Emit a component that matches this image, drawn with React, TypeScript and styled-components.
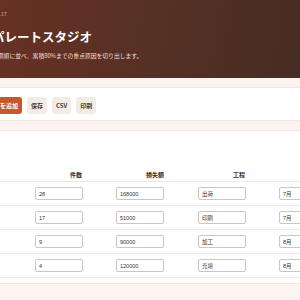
import styled, { createGlobalStyle } from 'styled-components';

const GlobalStyle = createGlobalStyle`
  html, body {
    margin: 0;
    overflow: hidden;
    background: #fbf4f1;
  }
  body {
    font-family: 'Noto Sans CJK JP', 'Noto Sans', sans-serif;
    color: #3b2c26;
  }
`;

const Page = styled.div`
  width: 480px;
  margin-left: -64px;
`;

const Hero = styled.header`
  background: linear-gradient(100deg, #6e3224 0%, #563024 45%, #3b2a22 100%);
  padding: 11px 20px 18px 56px;
  color: #fff;
`;

const Eyebrow = styled.div`
  font-size: 5px;
  line-height: 6px;
  color: #e2b8a6;
  letter-spacing: 0.3px;
`;

const Title = styled.h1`
  margin: 11px 0 0;
  font-size: 12.5px;
  line-height: 18px;
  font-weight: 700;
`;

const Lead = styled.p`
  margin: 5px 0 0;
  font-size: 5.8px;
  line-height: 9px;
  color: #f1dcd3;
`;

const Card = styled.section`
  background: #fff;
  border-top: 1px solid #f3e6e1;
  border-bottom: 1px solid #f3e6e1;
  margin-top: 9px;
`;

const Toolbar = styled(Card)`
  display: flex;
  gap: 5px;
  padding: 9px 56px 6px 54px;
`;

const Button = styled.button<{ $primary?: boolean }>`
  height: 17px;
  padding: 0 4px;
  border: none;
  border-radius: 3px;
  font-family: inherit;
  font-size: 6px;
  font-weight: 600;
  color: ${(p) => (p.$primary ? '#fff' : '#4a3a33')};
  background: ${(p) => (p.$primary ? '#c2592f' : '#f3ebe6')};
`;

const TableCard = styled(Card)`
  padding-top: 31px;
  padding-bottom: 5px;
`;

const Table = styled.table`
  border-collapse: collapse;
  table-layout: fixed;
  width: 480px;
`;

const Th = styled.th<{ $lead?: boolean }>`
  font-size: 6px;
  line-height: 9px;
  font-weight: 700;
  color: #3b2c26;
  text-align: ${(p) => (p.$lead ? 'left' : 'right')};
  padding: ${(p) => (p.$lead ? '8px 0 2px 8px' : '8px 34px 2px 0')};
  border-bottom: 1px solid #f1e7e3;
`;

const Td = styled.td<{ $lead?: boolean }>`
  height: 23px;
  padding: ${(p) => (p.$lead ? '0 0 0 8px' : '0')};
  border-bottom: 1px solid #f1e7e3;
`;

const Field = styled.input`
  box-sizing: border-box;
  display: block;
  width: 48px;
  height: 13px;
  padding: 0 3px;
  border: 1px solid #c9c6c4;
  border-radius: 2px;
  font-family: 'Liberation Sans', 'Noto Sans CJK JP', sans-serif;
  font-size: 5.5px;
  color: #333;
  background: #fff;
`;

const rows = [
  { cause: '印字ズレ', count: '28', loss: '168000', step: '出荷', month: '7月' },
  { cause: '異物混入', count: '17', loss: '51000', step: '印刷', month: '7月' },
  { cause: '寸法不良', count: '9', loss: '90000', step: '加工', month: '8月' },
  { cause: '液漏れ', count: '4', loss: '120000', step: '充填', month: '8月' },
];

export default function App() {
  return (
    <>
      <GlobalStyle />
      <Page>
        <Hero>
          <Eyebrow>No.17</Eyebrow>
          <Title>パレートスタジオ</Title>
          <Lead>金額順に並べ、累積80%までの重点原因を切り出します。</Lead>
        </Hero>
        <Toolbar>
          <Button $primary>行を追加</Button>
          <Button>保存</Button>
          <Button>CSV</Button>
          <Button>印刷</Button>
        </Toolbar>
        <TableCard>
          <Table>
            <colgroup>
              <col style={{ width: 99 }} />
              <col style={{ width: 81 }} />
              <col style={{ width: 82 }} />
              <col style={{ width: 81 }} />
              <col style={{ width: 81 }} />
              <col />
            </colgroup>
            <thead>
              <tr>
                <Th $lead>原因</Th>
                <Th>件数</Th>
                <Th>損失額</Th>
                <Th>工程</Th>
                <Th>月</Th>
                <Th />
              </tr>
            </thead>
            <tbody>
              {rows.map((r) => (
                <tr key={r.cause}>
                  <Td $lead>
                    <Field defaultValue={r.cause} />
                  </Td>
                  <Td>
                    <Field defaultValue={r.count} />
                  </Td>
                  <Td>
                    <Field defaultValue={r.loss} />
                  </Td>
                  <Td>
                    <Field defaultValue={r.step} />
                  </Td>
                  <Td>
                    <Field defaultValue={r.month} />
                  </Td>
                  <Td />
                </tr>
              ))}
            </tbody>
          </Table>
        </TableCard>
      </Page>
    </>
  );
}
